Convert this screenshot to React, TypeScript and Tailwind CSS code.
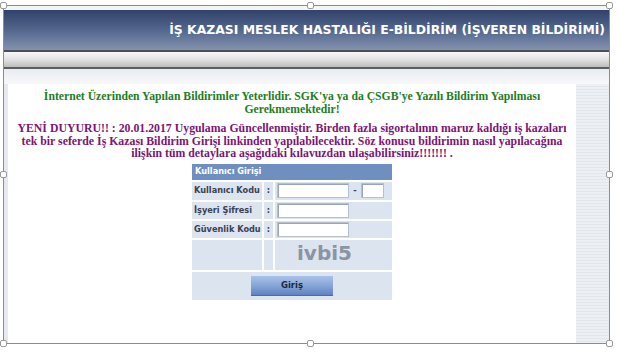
const Handle = ({ className }: { className: string }) => (
  <div
    className={`absolute w-[7px] h-[7px] bg-white border border-[#9a9a9a] rounded-[2px] ${className}`}
  />
);

const inputCls = "h-[15px] bg-white border border-[#b7bfcc] shadow-[inset_1px_1px_0_#9aa4b3]";

export default function App() {
  const serif = { fontFamily: '"Liberation Serif", "Times New Roman", serif' };
  const verdana = { fontFamily: '"DejaVu Sans", Verdana, sans-serif' };

  return (
    <div className="relative w-[619px] h-[356px] bg-white overflow-hidden">
      {/* picture frame */}
      <div className="absolute left-[3px] top-[5px] w-[607px] h-[339px] border border-[#8c8c8c] bg-[#f4f5f7] flex flex-col pt-[4px]">
        {/* header */}
        <div
          className="h-[40px] flex items-center justify-end pr-[4px] bg-gradient-to-b from-[#31426a] via-[#53678d] to-[#8492ae] text-white font-bold text-[12.4px]"
          style={verdana}
        >
          İŞ KAZASI MESLEK HASTALIĞI E-BİLDİRİM (İŞVEREN BİLDİRİMİ)
        </div>
        <div className="h-[2px] bg-[#4a4f58]" />
        <div className="h-[15px] bg-gradient-to-b from-[#f7f7f7] via-[#e2e2e2] to-[#bdbdbd]" />
        <div className="h-[2px] bg-[#5a5d62]" />
        <div className="h-[15px] bg-gradient-to-b from-[#e9ecf0] to-[#f7f8fa]" />

        {/* body */}
        <div className="flex-1 flex">
          <div className="w-[4px] bg-[#e6eaf0]" />
          <div className="flex-1 bg-white flex flex-col items-center pt-[6px]">
            <p
              className="text-center text-[#237d23] font-bold text-[11.7px] leading-[13px] whitespace-nowrap"
              style={serif}
            >
              İnternet Üzerinden Yapılan Bildirimler Yeterlidir. SGK'ya ya da ÇSGB'ye Yazılı Bildirim Yapılması
              <br />
              Gerekmemektedir!
            </p>
            <p
              className="mt-[6px] text-center text-[#7c1574] font-bold text-[11.8px] leading-[12.5px] whitespace-nowrap"
              style={serif}
            >
              YENİ DUYURU!! : 20.01.2017 Uygulama Güncellenmiştir. Birden fazla sigortalının maruz kaldığı iş kazaları
              <br />
              tek bir seferde İş Kazası Bildirim Girişi linkinden yapılabilecektir. Söz konusu bildirimin nasıl yapılacağına
              <br />
              ilişkin tüm detaylara aşağıdaki kılavuzdan ulaşabilirsiniz!!!!!!! .
            </p>

            {/* login box */}
            <div className="mt-[4px] w-[200px] bg-[#dce4ef] text-[8.2px] font-bold text-[#3b4150] whitespace-nowrap" style={verdana}>
              <div className="h-[16px] bg-[#6f8fc1] text-white flex items-center pl-[3px]">Kullanıcı Girişi</div>
              <div className="flex h-[20px] border-t-2 border-white">
                <div className="w-[72px] flex items-center pl-[2px] border-r-2 border-white">Kullanıcı Kodu</div>
                <div className="w-[11px] flex items-center justify-center border-r-2 border-white">:</div>
                <div className="flex-1 flex items-center pl-[2px] gap-[3px]">
                  <div className={`${inputCls} w-[72px]`} />
                  <div className="w-[6px] h-[16px] flex items-center justify-center">-</div>
                  <div className={`${inputCls} w-[23px]`} />
                </div>
              </div>
              <div className="flex h-[19px] border-t-2 border-white">
                <div className="w-[72px] flex items-center pl-[2px] border-r-2 border-white">İşyeri Şifresi</div>
                <div className="w-[11px] flex items-center justify-center border-r-2 border-white">:</div>
                <div className="flex-1 flex items-center pl-[2px]">
                  <div className={`${inputCls} w-[72px]`} />
                </div>
              </div>
              <div className="flex h-[19px] border-t-2 border-white">
                <div className="w-[72px] flex items-center pl-[2px] border-r-2 border-white">Güvenlik Kodu</div>
                <div className="w-[11px] flex items-center justify-center border-r-2 border-white">:</div>
                <div className="flex-1 flex items-center pl-[2px]">
                  <div className={`${inputCls} w-[72px]`} />
                </div>
              </div>
              <div className="flex h-[32px] border-t-2 border-white">
                <div className="w-[72px] border-r-2 border-white" />
                <div className="w-[11px] border-r-2 border-white" />
                <div className="flex-1 flex items-start pl-[22px] pt-[1px] text-[20px] leading-[24px] text-[#8a94a2]">ivbi5</div>
              </div>
              <div className="h-[30px] border-t-2 border-white flex items-center justify-center">
                <div className="w-[82px] h-[20px] flex items-center justify-center bg-gradient-to-b from-[#a9c2ea] via-[#86a6d8] to-[#5f83c0] border-b border-[#4a6aa3] text-[#1d2740] text-[8.5px]">
                  Giriş
                </div>
              </div>
            </div>
          </div>
          <div className="w-[33px] bg-[repeating-linear-gradient(to_bottom,#eceff4_0px,#eceff4_2px,#e2e6ed_2px,#e2e6ed_3px)]" />
        </div>
      </div>

      <Handle className="left-0 top-[2px]" />
      <Handle className="left-[307px] top-[2px]" />
      <Handle className="left-[606px] top-[2px]" />
      <Handle className="left-0 top-[171px]" />
      <Handle className="left-[606px] top-[171px]" />
      <Handle className="left-0 top-[340px]" />
      <Handle className="left-[307px] top-[340px]" />
      <Handle className="left-[606px] top-[340px]" />
    </div>
  );
}
